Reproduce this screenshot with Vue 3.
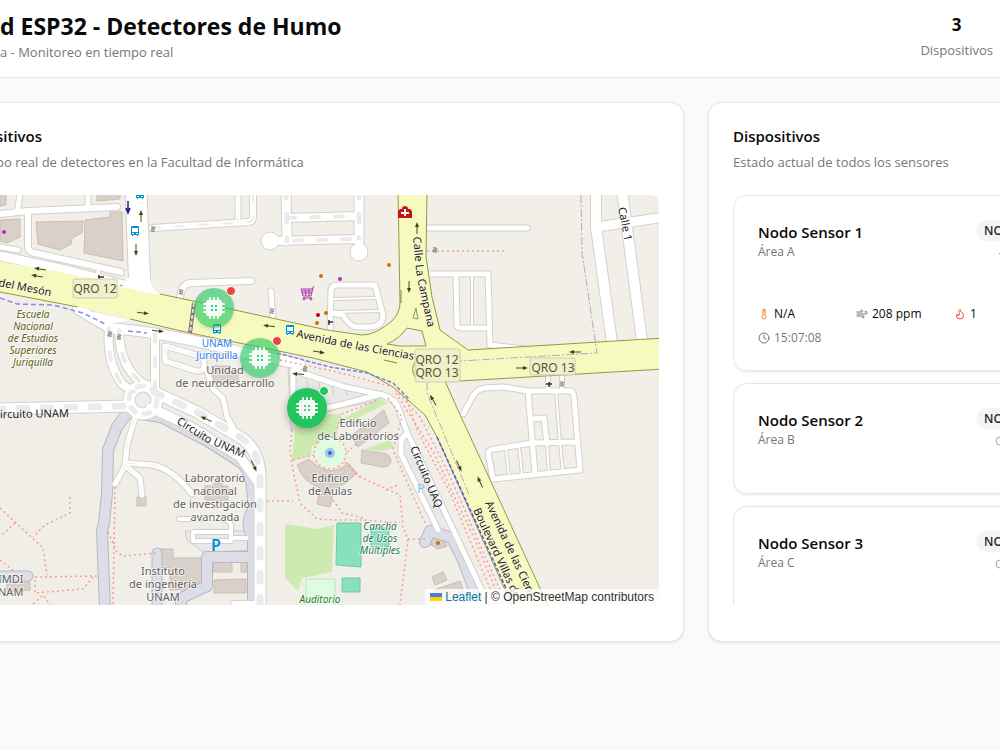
<script setup>
const nodes = [
  {
    name: 'Nodo Sensor 1',
    area: 'Área A',
    online: true,
    readings: { temp: 'N/A', smoke: '208 ppm', fire: '1' },
    time: '15:07:08',
  },
  { name: 'Nodo Sensor 2', area: 'Área B', online: false },
  { name: 'Nodo Sensor 3', area: 'Área C', online: false },
]

const markers = [
  { name: 'Nodo Sensor 2', x: 214, y: 113, online: false },
  { name: 'Nodo Sensor 3', x: 260, y: 163, online: false },
  { name: 'Nodo Sensor 1', x: 307, y: 213, online: true },
]

// Local streets and service roads: path and inner width
const roads = [
  { d: 'M0 214L28 211L117 207', w: 6 },
  { d: 'M20 195L17 212M88 195V207', w: 5 },
  { d: 'M28 213V246Q28 252 35 253L121 272', w: 6 },
  { d: 'M0 247L18 250', w: 5 },
  { d: 'M98 272L99 282', w: 4 },
  { d: 'M0 256L70 271L132 287', w: 9 },
  { d: 'M136 190L140 292', w: 21 },
  { d: 'M152 228L248 222Q253 222 253 216V190', w: 6, dash: true },
  { d: 'M238 190V221', w: 5, dash: true },
  { d: 'M180 297Q182 284 190 283L251 281', w: 6 },
  { d: 'M271 291L273 320', w: 5 },
  { d: 'M286 190L287 241M359 190V250', w: 9, dash: true },
  { d: 'M287 218L359 216M270 241L359 239', w: 8, dash: true },
  { d: 'M334 299L378 298M334 312L381 311', w: 2 },
  { d: 'M330 332L331 290Q332 285 337 285H375L383 315Q383 325 372 327H357Q350 327 343 315L332 313', w: 5 },
  { d: 'M424 228H527', w: 5 },
  { d: 'M472 275V328', w: 2 },
  { d: 'M426 274H488L490 345L525 349M456 275L457 325Q457 328 461 328H487', w: 5 },
  { d: 'M596 190V227L612 343M622 190L642 341', w: 10 },
  { d: 'M597 227L665 217', w: 9 },
  { d: 'M548 370V391M562 370V391', w: 4 },
  { d: 'M556 391L560 443L563 473M506 448L509 477M519 446L522 475M547 445L549 474', w: 2 },
  { d: 'M463 414L473 396Q477 389 485 388L503 387L528 391H570Q573 391 574 397L580 470L493 479L488 453Q488 450 495 449L532 443L576 442M528 391L535 474M532 419L544 418L547 444', w: 5 },
  { d: 'M78 309L110 328Q170 333 240 352L300 364', w: 10 },
  { d: 'M109 328Q106 362 122 384L134 392M119 330Q119 370 148 387M155 334V390', w: 8, dash: true },
  { d: 'M165 346V361L196 371Q205 372 204 363L203 357L165 346', w: 5, dash: true },
  { d: 'M207 371L213 389L223 398L227 417L233 427', w: 5 },
  { d: 'M-5 409L129 406', w: 11, dash: true },
  { d: 'M154 392L197 412L240 437Q260 450 260 478V610', w: 11, dash: true },
  { d: 'M150 408Q165 414 193 428L240 457L260 485', w: 9 },
  { d: 'M135 418L127 445L125 466L115 484M127 463L153 465Q174 470 192 494M127 467L140 478L142 495', w: 5, dash: true },
  { d: 'M179 519H200Q231 516 231 526V538M231 538H247M193 532H231V541H193ZM233 603H260', w: 4 },
  { d: 'M293 416V370L345 387L383 395Q396 399 399 410L407 432L450 523L484 595M293 415L340 405L378 395M407 433L401 440V454L438 530', w: 5 },
]

const plazas = [
  { d: 'M160 417L128 412L117 427L108 450L107 493L104 523L102 531L105 610', w: 10 },
  { d: 'M125 413Q154 413 165 420L207 442L240 463Q252 472 252 505V610', w: 8 },
  { d: 'M249 513Q243 527 252 540', w: 6 },
  { d: 'M252 557H207V586L181 598V610', w: 10 },
  { d: 'M-5 576H28', w: 9 },
  { d: 'M157 553V610', w: 9 },
  { d: 'M425 542L430 531L452 538L463 560L476 595', w: 10 },
]

const buildings = [
  'M36 222L83 221L82 233L72 238L71 244L60 250L38 244Z',
  'M85 220L110 217V212H122L123 261L84 253Z',
  'M0 220L20 219V237L7 243L0 241Z',
  'M97 190H120V199L97 201Z',
  'M0 190H6V205L0 206Z',
  'M137 497H146V506H137Z',
  'M7 582H30V590L7 592Z',
  'M157 549H173V558H202V588L170 590V568H157Z',
  'M213 562H232V572H213ZM241 562H247V572H241ZM214 580L246 579V593H214Z',
  'M205 486H214V483H222V486H228V500H205Z',
  'M213 366H230V372H238V383H213Z',
  'M297 465L309 459Q330 480 348 463L357 473L346 483L334 489L330 507L317 504L320 488Q303 482 297 465Z',
  'M351 436L384 410L389 423L358 447Z',
  'M362 450L383 453Q391 455 391 461Q390 467 383 467L361 463Z',
  'M431 539L443 536L447 546L438 549L431 545Z',
  'M432 577L443 572L447 580L435 585Z',
  'M434 590L460 581L466 597H434Z',
]

const footways = [
  'M427 251H505',
  'M115 487L113 605M108 532L117 552L123 556L157 553',
  'M0 508L43 548L47 575M70 497V513L45 525L33 537M15 523L0 537M0 560L15 572M35 577L97 576M35 580V593L83 589L93 577M33 604L43 595L50 605',
  'M280 360L337 372L393 387L420 417L448 472L500 590M407 400L417 430L450 493L492 593M396 393L434 453L475 540L496 590',
  'M388 398L402 417L393 450L425 523M352 470L360 477L400 495L403 527L408 539L400 605M408 539H425',
  'M267 501H293M292 430L290 450L293 470L300 503L317 519L335 520L363 520L400 523M333 500L342 513L363 518',
  'M293 460L314 455M334 438L342 414L378 400M347 452L358 443M345 462L360 477M386 490L400 484',
  'M202 336L180 331',
]

const arrows = [
  [40, 269, 190], [37, 276, 190], [141, 216, 270], [136, 250, 90], [143, 313, 8], [158, 331, 8],
  [269, 326, 188], [319, 352, 10], [417, 228, 270], [409, 287, 90], [575, 352, 180], [522, 368, 0],
  [459, 466, 65], [480, 482, 245], [433, 400, 240], [206, 419, 205], [254, 466, 65], [298, 374, 185],
]

const gates = [
  [153, 229], [181, 292], [272, 311], [435, 250], [110, 334], [119, 337], [305, 369], [562, 384],
]

const pois = [
  [4, 232, '#ac39ac'], [340, 279, '#ac39ac'], [321, 276, '#c77400'], [389, 265, '#c77400'],
  [326, 313, '#c77400'], [318, 315, '#bf0000'], [317, 323, '#c77400'], [438, 543, '#c77400'],
]

const labels = [
  { c: 'school', x: 33, y: 318, lh: 12, lines: ['Escuela', 'Nacional', 'de Estudios', 'Superiores', 'Juriquilla'] },
  { c: 'transit', x: 217, y: 347, lh: 12, lines: ['UNAM', 'Juriquilla'] },
  { c: 'place', x: 225, y: 374, lh: 13, lines: ['Unidad', 'de neurodesarrollo'] },
  { c: 'place', x: 358, y: 427, lh: 13, lines: ['Edificio', 'de Laboratorios'] },
  { c: 'place', x: 330, y: 482, lh: 13, lines: ['Edificio', 'de Aulas'] },
  { c: 'place', x: 215, y: 482, lh: 13, lines: ['Laboratorio', 'nacional', 'de investigación', 'avanzada'] },
  { c: 'place', x: 163, y: 575, lh: 13, lines: ['Instituto', 'de ingeniería', 'UNAM'] },
  { c: 'place edge', x: -2, y: 583, lh: 13, lines: ['IMDI', 'NAM'] },
  { c: 'sport', x: 380, y: 530, lh: 12, lines: ['Cancha', 'de Usos', 'Múltiples'] },
  { c: 'park', x: 320, y: 603, lh: 12, lines: ['Auditorio'] },
]

const mainRoad =
  'M-5 261L60 272L120 285L193 301L327 330L362 335Q376 335 393 320Q400 312 400 303L398 190H427L426 257L432 297L440 330L468 350L664 338V369L460 381H445L457 408L550 610H514L437 437L425 415L393 387L367 372L313 358L190 333L130 319L78 307L-5 291Z'
</script>

<template>
  <div class="page">
    <header class="topbar">
      <div class="brand">
        <h1>d ESP32 - Detectores de Humo</h1>
        <p>a - Monitoreo en tiempo real</p>
      </div>
      <div class="stat">
        <strong>3</strong>
        <span>Dispositivos</span>
      </div>
    </header>

    <main class="content">
      <section class="card map-card">
        <div class="card-head">
          <h2>sitivos</h2>
          <p>po real de detectores en la Facultad de Informática</p>
        </div>
        <div class="map">
          <svg class="tiles" viewBox="0 195 659 410" preserveAspectRatio="xMinYMin slice" role="img" aria-label="Mapa">
            <rect y="190" width="664" height="420" fill="#f2efe9" />
            <path d="M0 298L78 309L108 330L240 352L393 388L500 600V610H0Z" fill="#f0eee6" />

            <path d="M288 366L345 384L384 396L372 402L340 408L310 418L291 430Z" fill="#e9e9e7" stroke="#ccc" stroke-width="1" />
            <path d="M306 377L308 388M319 381L321 396M332 384L334 396M345 388L347 396" stroke="#ccc" />
            <path d="M185 531L262 531V550L203 552L187 540Z" fill="#e9e9e9" stroke="#ccc" stroke-width="1" />
            <path d="M407 436L449 528L438 530L401 454Z" fill="#e9e9e9" />
            <path d="M295 428L328 414L342 414L334 440L312 446L311 456L292 460ZM341 420L380 398L388 403L345 424ZM365 449L390 440L394 448L380 451ZM285 524L317 529L334 525L332 572L302 578L298 591L285 578Z" fill="#cdebb0" />
            <circle cx="330" cy="453" r="15" fill="#dffce2" />
            <path d="M306 579H335V606H306Z" fill="#dffce2" stroke="#b9e8b5" />
            <path d="M337 523H361V567L336 565ZM342 578H360V592H342ZM371 528H389V547H371Z" fill="#88e0be" stroke="#70c9a8" />
            <path v-for="d in buildings" :key="d" :d="d" fill="#d9d0c9" stroke="#cabdb3" />

            <g fill="none" stroke-linejoin="round">
              <path v-for="p in plazas" :key="p.d" :d="p.d" stroke="#b8b8c2" :stroke-width="p.w + 2" stroke-linecap="round" />
              <path v-for="p in plazas" :key="p.d" :d="p.d" stroke="#dddde8" :stroke-width="p.w" stroke-linecap="round" />
              <path v-for="r in roads" :key="r.d" :d="r.d" stroke="#d2d1ce" :stroke-width="r.w + 2" stroke-linecap="round" />
              <circle cx="143" cy="400" r="14" stroke="#d2d1ce" stroke-width="13" />
              <path v-for="r in roads" :key="r.d" :d="r.d" stroke="#fff" :stroke-width="r.w" stroke-linecap="round" />
              <circle cx="143" cy="400" r="14" stroke="#fff" stroke-width="11" />
              <circle cx="143" cy="400" r="14" stroke="#ebebeb" stroke-width="5" stroke-dasharray="6 9" stroke-linecap="round" />
              <g stroke="#ebebeb" stroke-dasharray="8 16" stroke-linecap="round">
                <path v-for="r in roads.filter((q) => q.dash)" :key="r.d" :d="r.d" :stroke-width="r.w - 4" />
              </g>
            </g>
            <circle cx="270" cy="241" r="9" fill="#fff" stroke="#d2d1ce" />
            <circle cx="359" cy="252" r="9" fill="#fff" stroke="#d2d1ce" />
            <path d="M276 241H284M359 240V248" fill="none" stroke="#fff" stroke-width="7" />

            <path :d="mainRoad" fill="#f7fabf" />
            <g fill="none" stroke="#8f9b42">
              <path d="M120 285L127 287M160 294L193 301L327 330L362 335Q376 335 393 320Q400 312 400 303L398 190" />
              <path d="M427 190L426 257L432 297L440 330L468 350L664 338" />
              <path d="M664 369L460 381H445L457 408L550 610" />
              <path d="M514 610L437 437L425 415L393 387L367 372L313 358L190 333L130 319M78 307L-5 291" />
            </g>
            <path d="M126 278H150Q152 290 160 295L121 287Q126 284 126 278Z" fill="#fff" />
            <path d="M80 309L107 325L128 320Z" fill="#fff" />
            <path d="M387 344Q399 339 407 328L422 331L426 346L400 346ZM413 318L416 308L418 319ZM415 362Q410 369 415 377" fill="#f2efe9" stroke="#8f9b42" />
            <path d="M401 290V303M384 360L397 363" stroke="#7c893a" stroke-width="1" />

            <g fill="none">
              <path v-for="d in footways" :key="d" :d="d" stroke="#fa9c94" stroke-width="1.5" stroke-dasharray="2 3" />
              <circle cx="330" cy="453" r="16" stroke="#fa9c94" stroke-width="1.5" stroke-dasharray="2 3" />
              <path d="M0 298L17 304L53 305L83 313L107 325M128 331L147 333" stroke="#8989f4" stroke-width="1.500" stroke-dasharray="5 3" />
              <path d="M277 353L330 367L367 373L393 383L410 400" stroke="#7c7cef" stroke-width="1.500" stroke-dasharray="4 2" />
              <path d="M437 437L510 597" stroke="#5555e6" stroke-width="1.500" stroke-dasharray="4 2" />
              <path d="M581 195L582 253L597 353L460 361M427 383V393L470 497" stroke="#c0a3c0" stroke-dasharray="8 2 2 2" />
              <path d="M194 303L190 333" stroke="#777" stroke-width="4" />
              <path d="M194 303L190 333" stroke="#f5d8d8" stroke-width="2" stroke-dasharray="4 2" />
            </g>

            <g v-for="a in arrows" :key="a.join()" :transform="`translate(${a[0]} ${a[1]}) rotate(${a[2]})`">
              <path d="M-6 0H2" stroke="#4a4a20" stroke-width="1" />
              <path d="M1 -2L6 0L1 2Z" fill="#3f3f18" />
            </g>
            <path d="M128 201V212M126 208L128 213L130 208" fill="none" stroke="#1c1c95" stroke-width="1.5" />
            <g v-for="g in gates" :key="g.join()" :transform="`translate(${g[0]} ${g[1]}) rotate(10)`">
              <path d="M-2 -2H2M-2 0H2M-2 2H2" stroke="#555" />
            </g>
            <path d="M98 277H104M99 275V279M328 322H333M329 320V325M546 384H552M549 382V387" stroke="#333" stroke-width="1.5" />
            <circle v-for="p in pois" :key="p.join()" :cx="p[0]" :cy="p[1]" r="2" :fill="p[2]" />
            <circle cx="330" cy="453" r="5" fill="#9bc8e8" />
            <circle cx="330" cy="453" r="2" fill="#3c62c8" />

            <g v-for="b in [[135, 231], [217, 329], [290, 330], [140, 194]]" :key="b.join()" :transform="`translate(${b[0]} ${b[1]})`">
              <path d="M-4 -4Q-4 -5 -3 -5H3Q4 -5 4 -4V4H3V5H2V4H-2V5H-3V4H-4Z" fill="#0092da" />
              <path d="M-3 -3H3V1H-3Z" fill="#fff" />
              <path d="M-3 2H-1V3H-3ZM1 2H3V3H1Z" fill="#fff" />
            </g>
            <path d="M398 211L400 209H402Q402 206 405 206Q408 206 408 209H410L412 211V218H398Z" fill="#c41414" />
            <path d="M405 209V216M401 213H409" stroke="#fff" stroke-width="2" />
            <g fill="none" stroke="#ac39ac" stroke-width="1">
              <path d="M301 289H312L314 286M301 289L303 296H311L313 288M302 291H312M302 293H312M305 289L306 296M309 289V296M303 298H312" />
              <circle cx="304" cy="299" r="1" />
              <circle cx="311" cy="299" r="1" />
            </g>

            <g class="shield">
              <rect x="73" y="279" width="44" height="19" rx="2" />
              <rect x="415" y="349" width="45" height="33" rx="2" />
              <rect x="530" y="358" width="45" height="17" rx="2" />
            </g>
            <g class="shield-text">
              <text x="95" y="293">QRO 12</text>
              <text x="437" y="364">QRO 12</text>
              <text x="437" y="377">QRO 13</text>
              <text x="553" y="372">QRO 13</text>
            </g>

            <g class="street">
              <path id="s1" d="M296 337Q350 349 420 361" fill="none" />
              <path id="s2" d="M413 237L416 270Q419 290 432 345" fill="none" />
              <path id="s3" d="M618 208L627 252" fill="none" />
              <path id="s4" d="M176 423L206 442L250 461" fill="none" />
              <path id="s5" d="M410 448L445 530" fill="none" />
              <path id="s6" d="M485 503L535 610" fill="none" />
              <path id="s7" d="M473 510L524 620" fill="none" />
              <path id="s8" d="M-2 286L60 298" fill="none" />
              <text><textPath href="#s1">Avenida de las Ciencias</textPath></text>
              <text><textPath href="#s2">Calle La Campana</textPath></text>
              <text><textPath href="#s3">Calle 1</textPath></text>
              <text><textPath href="#s4">Circuito UNAM</textPath></text>
              <text><textPath href="#s5">Circuito UAQ</textPath></text>
              <text><textPath href="#s6">Avenida de las Cienc</textPath></text>
              <text><textPath href="#s7">Boulevard Villas de</textPath></text>
              <text><textPath href="#s8">del Mesón</textPath></text>
              <text x="69" y="417" text-anchor="end" transform="rotate(-1 69 417)">ircuito UNAM</text>
            </g>
            <text v-for="l in labels" :key="l.y" :class="['label', l.c]">
              <tspan v-for="(t, i) in l.lines" :key="t" :x="l.x" :y="l.y + i * l.lh">{{ t }}</tspan>
            </text>
            <text class="parking" x="216" y="551">P</text>
            <text class="parking light" x="421" y="493">P</text>
          </svg>

          <button
            v-for="m in markers"
            :key="m.name"
            class="marker"
            :class="{ online: m.online }"
            :style="{ left: m.x + 'px', top: m.y + 'px' }"
            type="button"
            :aria-label="m.name"
          >
            <svg viewBox="0 0 24 24" width="24" height="24" aria-hidden="true">
              <path d="M8 2V22M12 2V22M16 2V22M2 8H22M2 12H22M2 16H22" stroke="#f2fcf5" stroke-width="2" stroke-linecap="round" />
              <rect x="4" y="4" width="16" height="16" rx="2" fill="#f2fcf5" />
              <path d="M9 9H15V15H9Z" class="core" />
              <path d="M12 8V16M8 12H16" stroke="#f2fcf5" stroke-width="2" />
              <rect x="11" y="11" width="2" height="2" fill="#f2fcf5" />
            </svg>
            <span class="dot"></span>
          </button>

          <div class="attribution">
            <svg viewBox="0 0 12 8" width="12" height="8" aria-hidden="true">
              <path fill="#4c7be1" d="M0 0h12v4H0z" />
              <path fill="#ffd500" d="M0 4h12v4H0z" />
            </svg>
            <a href="#">Leaflet</a> | © OpenStreetMap contributors
          </div>
        </div>
      </section>

      <section class="card side-card">
        <div class="card-head">
          <h2>Dispositivos</h2>
          <p>Estado actual de todos los sensores</p>
        </div>
        <div class="node-list">
          <article v-for="n in nodes" :key="n.name" class="node">
            <div class="node-head">
              <div>
                <h3>{{ n.name }}</h3>
                <p>{{ n.area }}</p>
              </div>
              <div class="node-state">
                <span class="badge">NORMAL</span>
                <svg v-if="n.online" viewBox="0 0 38 12" width="38" height="12" aria-hidden="true">
                  <path d="M1 7Q6 1 11 7M3 9Q6 5 9 9" fill="none" stroke="#22c55e" />
                </svg>
                <svg v-else viewBox="0 0 42 12" width="42" height="12" aria-hidden="true">
                  <circle cx="6" cy="6" r="4" fill="none" stroke="#9ca3af" />
                </svg>
              </div>
            </div>
            <template v-if="n.readings">
              <div class="readings">
                <span>
                  <svg viewBox="0 0 24 24" width="12" height="12" stroke="#f97316" aria-hidden="true">
                    <path d="M14 4v10.5a4 4 0 1 1-4 0V4a2 2 0 0 1 4 0Z" />
                  </svg>
                  {{ n.readings.temp }}
                </span>
                <span>
                  <svg viewBox="0 0 24 24" width="12" height="12" stroke="#6b7280" aria-hidden="true">
                    <path d="M17.700 7.700a2.500 2.500 0 1 1 1.800 4.300H2M9.600 4.600A2 2 0 1 1 11 8H2M12.600 19.400A2 2 0 1 0 14 16H2" />
                  </svg>
                  {{ n.readings.smoke }}
                </span>
                <span>
                  <svg viewBox="0 0 24 24" width="12" height="12" stroke="#ef4444" aria-hidden="true">
                    <path d="M8.500 14.500A2.500 2.500 0 0 0 11 12c0-1.380-.5-2-1-3-1.072-2.143-.224-4.054 2-6 .5 2.500 2 4.900 4 6.500 2 1.600 3 3.500 3 5.500a7 7 0 1 1-14 0c0-1.153.433-2.294 1-3a2.500 2.500 0 0 0 2.500 2.500z" />
                  </svg>
                  {{ n.readings.fire }}
                </span>
              </div>
              <div class="time">
                <svg viewBox="0 0 24 24" width="12" height="12" stroke="#71717a" aria-hidden="true">
                  <circle cx="12" cy="12" r="10" />
                  <path d="M12 6v6l4 2" />
                </svg>
                <time>{{ n.time }}</time>
              </div>
            </template>
          </article>
        </div>
      </section>
    </main>
  </div>
</template>

<style>
body {
  background: #f9fafb;
}
</style>

<style scoped>
.page {
  min-height: 100vh;
  overflow: hidden;
  background: #f9fafb;
  color: #0a0a0a;
  font-family: "Open Sans", "Noto Sans", sans-serif;
}
h1, h2, h3, p {
  margin: 0;
}
.topbar {
  display: flex;
  justify-content: space-between;
  box-sizing: border-box;
  height: 78px;
  padding: 10px 7px 0 0;
  background: #fff;
  border-bottom: 1px solid #e5e7eb;
}
h1 {
  font-size: 23px;
  line-height: 32px;
  font-weight: 700;
  white-space: nowrap;
}
.brand p, .card-head p, .stat span {
  font-size: 13px;
  line-height: 20px;
  color: #737780;
  white-space: nowrap;
}
.stat {
  display: flex;
  flex-direction: column;
  align-items: center;
}
.stat strong {
  font-size: 17px;
  line-height: 30px;
}
.content {
  display: grid;
  grid-template-columns: minmax(0, 1fr) 292px;
  gap: 24px;
  padding-top: 24px;
}
.card {
  box-sizing: border-box;
  padding: 23px 24px 36px;
  background: #fff;
  border: 1px solid #e5e7eb;
  border-radius: 14px;
  box-shadow: 0 1px 3px rgba(0, 0, 0, 0.1);
}
.map-card {
  padding-left: 0;
  border-left: 0;
  border-radius: 0 14px 14px 0;
}
.map-card .card-head {
  margin-left: -4px;
}
.side-card {
  width: 378px;
}
.card-head {
  height: 69px;
}
h2 {
  padding-bottom: 6px;
  font-size: 15px;
  line-height: 20px;
  font-weight: 600;
}
.map {
  position: relative;
  height: 410px;
  overflow: hidden;
  border-radius: 0 8px 0 0;
}
.tiles {
  display: block;
  width: 100%;
  height: 100%;
}
.tiles text {
  font-family: "Noto Sans", sans-serif;
}
.shield rect {
  fill: #eeefcd;
  fill-opacity: 0.9;
  stroke: #cdcea8;
}
.shield-text text {
  font-size: 12px;
  fill: #55582f;
  text-anchor: middle;
}
.street text {
  font-size: 11px;
  fill: #222;
  stroke: #fff;
  stroke-opacity: 0.5;
  stroke-width: 1px;
  paint-order: stroke;
}
.label {
  font-size: 11px;
  text-anchor: middle;
  stroke: #fff;
  stroke-opacity: 0.6;
  stroke-width: 2px;
  paint-order: stroke;
}
.place {
  fill: #5f5f5f;
}
.edge {
  text-anchor: start;
}
.school, .sport, .park {
  font-size: 10px;
  font-style: italic;
}
.school {
  fill: #5f6020;
}
.sport {
  fill: #277a5d;
}
.park {
  fill: #267a2c;
}
.transit {
  font-size: 10px;
  fill: #2d7cf0;
}
.parking {
  font-size: 16px;
  font-weight: 600;
  fill: #0092da;
  text-anchor: middle;
}
.parking.light {
  font-size: 13px;
  font-weight: 400;
  fill: #7ec6ec;
}
.marker {
  position: absolute;
  display: flex;
  align-items: center;
  justify-content: center;
  width: 40px;
  height: 40px;
  margin: -20px 0 0 -20px;
  padding: 0;
  border: 0;
  border-radius: 50%;
  background: rgba(34, 197, 94, 0.62);
  box-shadow: 0 2px 4px rgba(0, 0, 0, 0.12);
}
.marker.online {
  background: #22c55e;
  box-shadow: 0 3px 8px rgba(0, 0, 0, 0.3);
}
.core {
  fill: #4fcb7e;
}
.dot {
  position: absolute;
  top: -2px;
  right: -2px;
  width: 8px;
  height: 8px;
  border: 1px solid #fff;
  border-radius: 50%;
  background: #ef4444;
}
.online .dot {
  background: #22c55e;
}
.attribution {
  position: absolute;
  right: 0;
  bottom: 0;
  padding: 0 5px;
  background: rgba(255, 255, 255, 0.8);
  color: #333;
  font-family: "Liberation Sans", Arial, sans-serif;
  font-size: 12px;
  line-height: 16px;
  white-space: nowrap;
}
.attribution svg {
  margin-right: 3px;
}
.attribution a {
  color: #0078a8;
  text-decoration: none;
}
.node-list {
  display: flex;
  flex-direction: column;
  gap: 12px;
  height: 410px;
  overflow: hidden;
}
.node {
  flex: none;
  box-sizing: border-box;
  min-height: 111px;
  padding: 24px 24px 22px;
  border: 1px solid #e5e7eb;
  border-radius: 14px;
  box-shadow: 0 1px 3px rgba(0, 0, 0, 0.1);
}
.node-head {
  display: flex;
  justify-content: space-between;
}
h3 {
  font-size: 15px;
  line-height: 24px;
  font-weight: 600;
}
.node p {
  font-size: 12px;
  line-height: 16px;
  color: #737780;
}
.node-state {
  display: flex;
  flex-direction: column;
  align-items: flex-end;
  gap: 6px;
}
.badge {
  box-sizing: border-box;
  width: 60px;
  padding: 0 8px;
  border-radius: 11px;
  background: #f4f4f5;
  color: #27272a;
  font-size: 12px;
  line-height: 21px;
  font-weight: 600;
}
.readings {
  display: grid;
  grid-template-columns: repeat(3, 1fr);
  gap: 16px;
  margin-top: 44px;
  font-size: 12px;
  line-height: 20px;
}
.readings span, .time {
  display: flex;
  align-items: center;
  gap: 4px;
  white-space: nowrap;
}
.readings svg, .time svg {
  fill: none;
  stroke-width: 2;
  stroke-linecap: round;
  stroke-linejoin: round;
}
.time {
  margin-top: 4px;
  color: #737780;
  font-size: 12px;
  line-height: 20px;
}
</style>
